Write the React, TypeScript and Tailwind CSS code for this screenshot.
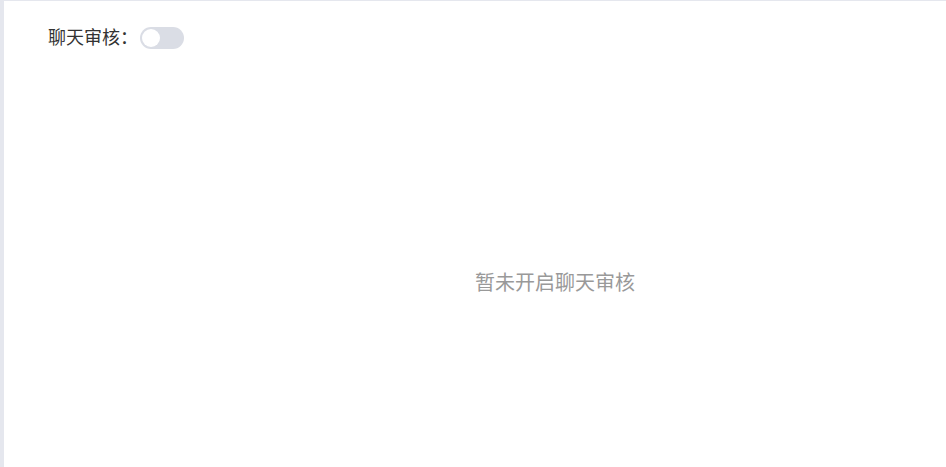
import React from 'react';

const Toggle = ({ on, onChange }: { on: boolean; onChange: (v: boolean) => void }) => (
    <button
        type="button"
        onClick={() => onChange(!on)}
        className={`relative ml-[2px] h-[22px] w-[44px] rounded-full p-[2px] transition-colors ${on ? 'bg-[#165dff]' : 'bg-[#dadde5]'}`}
    >
        <span
            className={`block h-[18px] w-[18px] rounded-full bg-white transition-transform ${on ? 'translate-x-[22px]' : 'translate-x-0'}`}
        />
    </button>
);

export default function App() {
    const [enabled, setEnabled] = React.useState(false);

    return (
        <div className="flex h-[467px] w-full bg-white font-['Noto_Sans_CJK_SC',sans-serif]">
            <div className="w-[4px] bg-[#e5e7ee]" />
            <div className="flex flex-1 flex-col border-t border-[#e5e7ee]">
                <div className="flex items-center pl-[44px] pt-[24px]">
                    <span className="pb-[3px] text-[18px] leading-[22px] text-[#333]">聊天审核：</span>
                    <Toggle on={enabled} onChange={setEnabled} />
                </div>
                <div className="flex flex-1 items-center justify-center pl-[160px] pt-[47px]">
                    <p className="text-[20px] leading-[28px] text-[#999]">
                        {enabled ? '聊天审核已开启' : '暂未开启聊天审核'}
                    </p>
                </div>
            </div>
        </div>
    );
}
